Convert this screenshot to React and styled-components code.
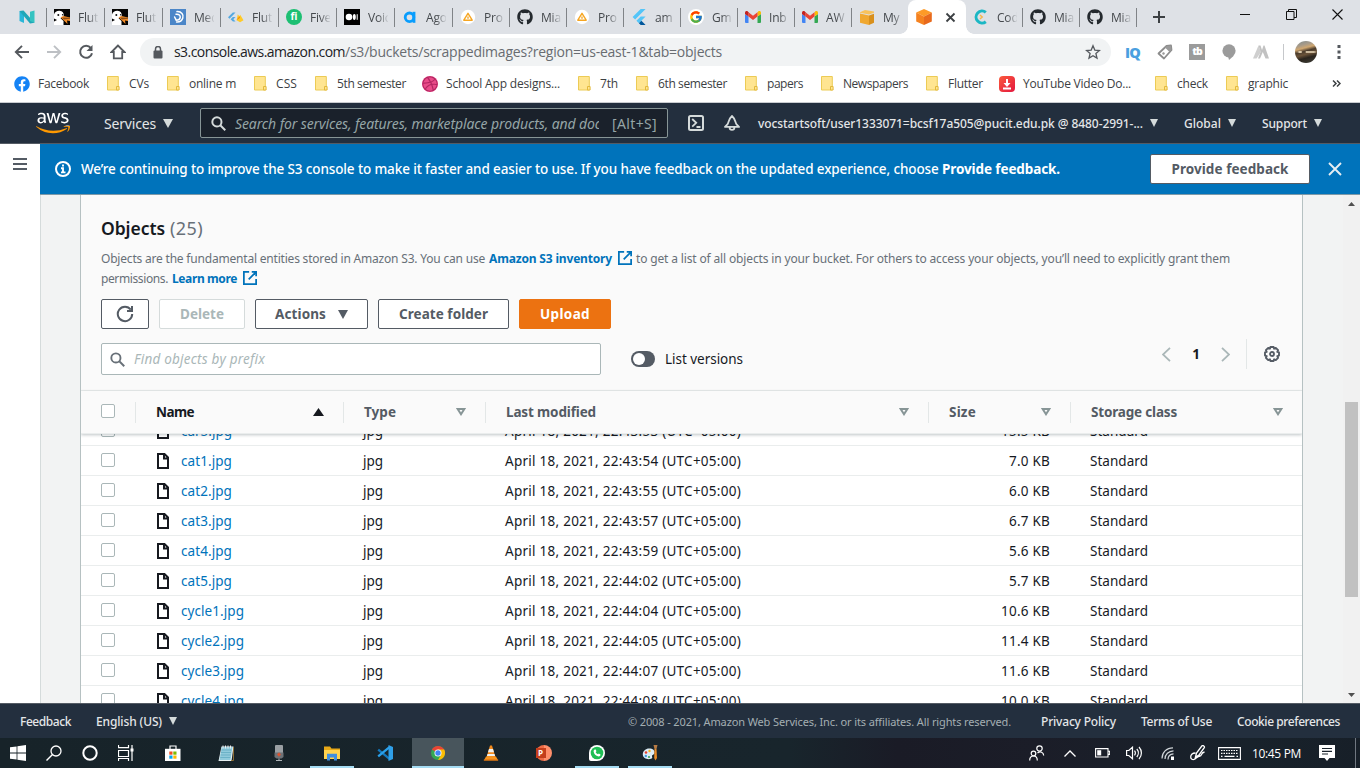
import React, { useLayoutEffect, useRef } from "react";
import styled, { createGlobalStyle, css } from "styled-components";
import { FaAws, FaGithub, FaDribbble, FaFacebook, FaWhatsapp } from "react-icons/fa";
import { FcGoogle } from "react-icons/fc";

const ember = `"Noto Sans", "Open Sans", sans-serif`;
const segoe = `"Open Sans", "Noto Sans", sans-serif`;

const GlobalStyle = createGlobalStyle`
  * { box-sizing: border-box; }
  body { margin: 0; overflow: hidden; background: #fff; font-family: ${ember}; }
  svg { display: block; flex: none; }
`;

/* ---------- text tracked to a set width ---------- */

const Tracked = styled.span`
  display: inline-block;
  flex: none;
  width: ${(p) => p.$w}px;
  white-space: pre;
  font-size: ${(p) => (p.$size ? `${p.$size}px` : "inherit")};
  font-weight: ${(p) => p.$weight || "inherit"};
  color: ${(p) => p.$color || "inherit"};
`;

function Fit({ w, size, weight, color, children }) {
  const ref = useRef(null);
  useLayoutEffect(() => {
    const el = ref.current;
    el.style.letterSpacing = "0px";
    const natural = el.getBoundingClientRect().width;
    el.style.letterSpacing = `${(w - natural) / children.length}px`;
  }, [w, children]);
  return (
    <Tracked $w={w} $size={size} $weight={weight} $color={color}>
      <span ref={ref}>{children}</span>
    </Tracked>
  );
}

/* ---------- shared shapes ---------- */

const Svg = ({ s = 16, w, h, box = "0 0 16 16", children, ...rest }) => (
  <svg width={w || s} height={h || s} viewBox={box} fill="none" {...rest}>
    {children}
  </svg>
);

const Caret = styled.i`
  flex: none;
  width: 0;
  height: 0;
  margin-left: ${(p) => p.$gap || 0}px;
  border: ${(p) => p.$half || 4.5}px solid transparent;
  border-bottom-width: 0;
  border-top: ${(p) => p.$h || 8}px solid ${(p) => p.$color || "#d5dbdb"};
`;

/* ---------- browser frame ---------- */

const Screen = styled.div`
  width: 1360px;
  height: 768px;
  display: flex;
  flex-direction: column;
  overflow: hidden;
`;

const TabStrip = styled.div`
  height: 34px;
  flex: none;
  display: flex;
  background: #dee1e6;
  font: 12px ${segoe};
  color: #45494d;
`;

const Tab = styled.div`
  width: ${(p) => p.$w || 57}px;
  height: 34px;
  display: flex;
  align-items: center;
  gap: 8px;
  padding-left: 7px;
  position: relative;
  ${(p) =>
    !p.$last &&
    css`
      &::after {
        content: "";
        position: absolute;
        right: 0;
        top: 8px;
        width: 1px;
        height: 19px;
        background: #808387;
      }
    `}
`;

const FirstTab = styled(Tab)`
  padding-left: 19px;
`;

const ActiveTab = styled(Tab)`
  background: #fff;
  border-radius: 8px 8px 0 0;
  padding-left: 8px;
  gap: 13px;
  &::before {
    content: "";
    position: absolute;
    left: -8px;
    right: -8px;
    bottom: 0;
    height: 8px;
    background: radial-gradient(circle at 0 0, transparent 7.5px, #fff 8px) left / 8px 8px no-repeat,
      radial-gradient(circle at 100% 0, transparent 7.5px, #fff 8px) right / 8px 8px no-repeat;
  }
`;

const TabLabel = styled.span`
  width: 20px;
  white-space: nowrap;
  font-size: 12px;
  letter-spacing: -0.2px;
  mask-image: linear-gradient(90deg, #000 50%, transparent 105%);
`;

const NewTab = styled.div`
  width: 44px;
  display: flex;
  align-items: center;
  padding-left: 16px;
`;

const WindowControls = styled.div`
  margin-left: auto;
  height: 28px;
  display: flex;
  align-items: center;
  gap: 35px;
  padding-right: 17px;
`;

const Toolbar = styled.div`
  height: 35px;
  flex: none;
  display: flex;
  align-items: center;
  padding: 1px 0 0 14px;
  background: #fff;
`;

const NavButtons = styled.div`
  width: 126px;
  display: flex;
  gap: 16px;
`;

const Omnibox = styled.div`
  width: 971px;
  height: 28px;
  border-radius: 14px;
  background: #f1f3f4;
  display: flex;
  align-items: center;
  padding: 0 10px 0 13px;
  font: 14px ${segoe};
  color: #202124;
`;

const Url = styled.div`
  margin-left: 11px;
  flex: 1;
  display: flex;
  line-height: 26px;
`;

const Extensions = styled.div`
  display: flex;
  align-items: center;
  gap: 16px;
  margin-left: 14px;
`;

const IqMark = styled.b`
  width: 16px;
  font: 800 14.5px/15px ${segoe};
  letter-spacing: -0.8px;
  color: #4a9fe0;
`;

const TbMark = styled.b`
  width: 16px;
  height: 16px;
  background: #9b9b9b;
  color: #fff;
  font: 800 10.5px/15px ${segoe};
  letter-spacing: -1px;
  text-align: center;
`;

const ToolbarRule = styled.i`
  width: 1px;
  height: 16px;
  background: #c6c8cb;
  margin-left: -2px;
`;

const Avatar = styled.i`
  width: 22px;
  height: 22px;
  border-radius: 50%;
  margin: 0 4px 0 -5px;
  background: linear-gradient(90deg, transparent 10%, #d9c7a8 20% 28%, transparent 34% 46%, #cbb99c 52% 86%, transparent) 0 10px /
      22px 2px no-repeat,
    linear-gradient(165deg, #7f8c90 0, #a99b88 22%, #d0a770 34%, #4b3c2d 46%, #6b5339 58%, #2a241d 72%, #41413a 100%);
`;

const Bookmarks = styled.div`
  height: 34px;
  flex: none;
  display: flex;
  align-items: center;
  gap: 16px;
  padding: 0 19px 4px 14px;
  background: #fff;
  border-bottom: 1px solid #c9ccd0;
  font: 12px ${segoe};
  color: #3c4043;
`;

const Bookmark = styled.div`
  display: flex;
  align-items: center;
  gap: 8px;
  margin-right: ${(p) => p.$after || 0}px;
`;

const FolderSlot = styled.i`
  width: 16px;
  display: flex;
  justify-content: center;
`;

const YtSlot = styled.i`
  width: 16px;
  height: 16px;
  border-radius: 4px;
  background: linear-gradient(135deg, #fb5a3c, #e3183f);
`;

const Overflow = styled.div`
  margin-left: auto;
`;

/* ---------- AWS console ---------- */

const AwsNav = styled.div`
  height: 41px;
  flex: none;
  display: flex;
  align-items: center;
  padding-left: 36px;
  background: #232f3e;
  border-bottom: 1px solid #545b64;
  color: #e4e6e8;
  font-size: 12px;
`;

const AwsLogo = styled.div`
  width: 68px;
  svg {
    fill: url(#aws-tone);
  }
`;

const ServicesMenu = styled.div`
  width: 96px;
  display: flex;
  align-items: center;
  font-size: 14px;
`;

const NavSearch = styled.div`
  width: 468px;
  height: 30px;
  display: flex;
  align-items: center;
  padding-left: 10px;
  border: 1px solid #879596;
  border-radius: 2px;
  background: #1a212b;
  color: #95a5a6;
  font-size: 14px;
`;

const NavPlaceholder = styled.div`
  width: 364px;
  margin: 0 13px 0 9px;
  overflow: hidden;
  font-style: italic;
  white-space: nowrap;
`;

const NavIcons = styled.div`
  display: flex;
  gap: 20px;
  margin: 0 18px 0 20px;
`;

const NavMenu = styled.div`
  display: flex;
  align-items: center;
  font-weight: 500;
  margin-right: ${(p) => p.$after || 0}px;
`;

const Console = styled.div`
  height: 559px;
  flex: none;
  display: flex;
`;

const SideRail = styled.div`
  width: 41px;
  padding: 14px 0 0 13px;
  background: #fff;
  border-right: 1px solid #d5dbdb;
`;

const Main = styled.div`
  flex: 1;
  display: flex;
  flex-direction: column;
  margin-left: -1px;
  z-index: 1;
`;

const Banner = styled.div`
  height: 51px;
  flex: none;
  display: flex;
  align-items: center;
  padding: 0 18px 0 15px;
  background: #0073bb;
  border-bottom: 1px solid #7d99a8;
  color: #fff;
  font-size: 14px;
`;

const BannerText = styled.div`
  flex: 1;
  margin-left: 10px;
  display: flex;
`;

const Button = styled.button`
  height: ${(p) => p.$h || 30}px;
  width: ${(p) => p.$w}px;
  display: flex;
  align-items: center;
  justify-content: center;
  padding: 0;
  border: 1px solid ${(p) => (p.$kind === "primary" ? "#ec7211" : p.$kind === "off" ? "#d5dbdb" : "#545b64")};
  border-radius: 2px;
  background: ${(p) => (p.$kind === "primary" ? "#ec7211" : "#fff")};
  color: ${(p) => (p.$kind === "primary" ? "#fff" : p.$kind === "off" ? "#aab7b8" : "#545b64")};
  font: 700 13.5px ${ember};
`;

const BannerClose = styled.div`
  margin-left: 18px;
`;

const Viewport = styled.div`
  height: 508px;
  display: flex;
  background: #f2f3f3;
  padding-left: 40px;
  border-left: 1px solid #d5dbdb;
`;

const Card = styled.section`
  width: 1223px;
  margin-left: -1px;
  border: solid #b6c1c2;
  border-width: 0 1px;
  background: #fff;
  overflow: hidden;
  color: #16191f;
  font-size: 14px;
`;

const CardHead = styled.header`
  height: 196px;
  padding: 19px 20px 0;
  background: #fafafa;
  border-bottom: 1px solid #eaeded;
`;

const Title = styled.h2`
  margin: 0;
  height: 28px;
  display: flex;
  align-items: center;
  gap: 5px;
  font: 700 18px ${ember};
`;

const Description = styled.div`
  margin-top: 6px;
  color: #687078;
  font-size: 12px;
`;

const DescriptionLine = styled.div`
  height: 20px;
  display: flex;
  align-items: center;
  gap: 4px;
`;

const Link = styled.a`
  display: inline-flex;
  align-items: center;
  gap: 6px;
  color: #0073bb;
`;

const Actions = styled.div`
  display: flex;
  gap: 10px;
  margin-top: 11px;
`;

const FilterRow = styled.div`
  display: flex;
  height: 32px;
  margin-top: 14px;
`;

const FilterInput = styled.div`
  width: 500px;
  height: 32px;
  display: flex;
  align-items: center;
  gap: 9px;
  padding-left: 8px;
  border: 1px solid #aab7b8;
  border-radius: 2px;
  background: #fff;
  color: #aab7b8;
  font-style: italic;
`;

const VersionToggle = styled.label`
  display: flex;
  align-items: center;
  gap: 10px;
  margin-left: 30px;
`;

const Switch = styled.i`
  width: 24px;
  height: 16px;
  padding: 2px;
  border-radius: 8px;
  background: #545b64;
  &::before {
    content: "";
    display: block;
    width: 12px;
    height: 12px;
    border-radius: 50%;
    background: #fff;
  }
`;

const Pager = styled.div`
  height: 30px;
  display: flex;
  align-items: center;
  margin: -4px 2px 0 auto;
`;

const PageNumber = styled.b`
  width: 50px;
  text-align: center;
  font-size: 13.5px;
`;

const PagerRule = styled.i`
  width: 1px;
  height: 30px;
  margin: 0 17px 0 16px;
  background: #e3e7e7;
`;

const columns = "55px 208px 142px 443px 142px 231px";

const HeadRow = styled.div`
  position: relative;
  display: grid;
  grid-template-columns: ${columns};
  height: 43px;
  background: #fafafa;
  border-bottom: 1px solid #eaeded;
  box-shadow: 0 1px 3px rgba(0, 28, 36, 0.25);
  z-index: 1;
`;

const HeadCell = styled.div`
  display: flex;
  align-items: center;
  justify-content: space-between;
  padding: 0 20px;
  position: relative;
  font-weight: 700;
  font-size: 13.5px;
  color: ${(p) => (p.$sorted ? "#16191f" : "#545b64")};
  &:last-child {
    padding-right: 19px;
  }
  &:not(:last-child)::after {
    content: "";
    position: absolute;
    right: 0;
    top: 11px;
    width: 1px;
    height: 21px;
    background: #e3e7e7;
  }
`;

const SelectAllCell = styled(HeadCell)`
  padding-bottom: 2px;
`;

const Rows = styled.div`
  margin-top: -18px;
`;

const Row = styled.div`
  display: grid;
  grid-template-columns: ${columns};
  height: 30px;
  border-bottom: 1px solid #eaeded;
  font-size: 13.5px;
`;

const Cell = styled.div`
  display: flex;
  align-items: center;
  padding: 1px 21px 0 19px;
  justify-content: ${(p) => (p.$right ? "flex-end" : "flex-start")};
`;

const CheckCell = styled(Cell)`
  padding: 0 0 1px 20px;
`;

const NameCell = styled(Cell)`
  padding-left: 21px;
  gap: 12px;
  color: #0073bb;
`;

const Checkbox = styled.i`
  width: 14px;
  height: 14px;
  border: 1px solid #aab7b8;
  border-radius: 2px;
  background: #fff;
`;

const ScrollTrack = styled.div`
  width: 17px;
  margin-left: auto;
  display: flex;
  flex-direction: column;
  align-items: center;
  padding: 7px 0 6px;
  background: #f1f1f1;
`;

const Thumb = styled.i`
  width: 13px;
  height: 195px;
  margin: 196px 0 auto;
  background: #c1c1c1;
`;

const Footer = styled.footer`
  height: 35px;
  flex: none;
  display: flex;
  align-items: center;
  padding: 1px 20px 0;
  background: #232f3e;
  border-top: 1px solid #545b64;
  color: #e4e6e8;
  font-size: 12px;
  font-weight: 500;
  z-index: 2;
`;

const Legal = styled.div`
  margin-left: auto;
  display: flex;
  gap: 25px;
`;

const LegalNote = styled.div`
  margin-right: 5px;
  font-weight: 400;
`;

const FooterMenu = styled.div`
  display: flex;
  align-items: center;
  margin-left: 25px;
  padding-bottom: 1px;
`;

/* ---------- taskbar ---------- */

const Taskbar = styled.div`
  height: 30px;
  flex: none;
  display: flex;
  background: linear-gradient(90deg, #172329 0, #18252c 58%, #1a1b26 66%, #1b1d28 76%, #18222b 92%, #171f28 100%);
  color: #fff;
`;

const SystemButtons = styled.div`
  width: 146px;
  display: flex;
  align-items: center;
  gap: 20px;
  padding-left: 10px;
`;

const AppSlot = styled.div`
  width: ${(p) => (p.$active ? 52 : 44)}px;
  margin: 0 ${(p) => (p.$active ? 0.5 : 4.5)}px;
  height: 30px;
  display: flex;
  align-items: center;
  justify-content: center;
  background: ${(p) => (p.$active ? "#48555c" : "transparent")};
  box-shadow: ${(p) => (p.$open ? "inset 0 -2px 0 #a5dcf3" : "none")};
`;

const Tray = styled.div`
  margin-left: auto;
  display: flex;
  align-items: center;
  padding-right: 4px;
`;

const TraySlot = styled.div`
  width: ${(p) => p.$w}px;
  display: flex;
`;

const Clock = styled.div`
  width: 67px;
  font: 12px ${segoe};
`;

const DesktopEdge = styled.i`
  width: 1px;
  height: 30px;
  background: #707780;
`;

/* ---------- drawings ---------- */

const DuckIcon = () => (
  <Svg>
    <path fill="#050505" d="M0 0h16v16H0z" />
    <path fill="#fff" d="M0 5.500C.8 2.800 3 1.600 5.600 1.800 8.500 2 10 4 9.700 6.500L9.200 8.400 6.500 9.200 9.500 12v4H0v-3.500L3 11 0 9.500z" />
    <circle cx="4.300" cy="6" r="1" fill="#111" />
    <circle cx="8.600" cy="5.800" r=".7" fill="#111" />
    <path fill="#f28c28" d="M6.500 8.200 9.500 7l6.500 1.500v3.500l-3-.5.5 3.500L10 11.500z" />
    <path fill="#8a4d17" d="m8 8.500 8 .2v1L10 10.500z" />
  </Svg>
);

const FlutterIcon = () => (
  <Svg>
    <path fill="#54c5f8" d="M9.7 0 1.6 8l2.5 2.5L14.6 0zM9.7 7.4 5.4 11.7 7.9 14.2l6.7-6.8z" />
    <path fill="#01579b" d="M7.900 14.200 9.700 16h4.900l-4.200-4.300z" />
  </Svg>
);

const FlutterFireIcon = () => (
  <Svg>
    <path fill="#54a8e0" d="M4.800 3.600 0 8.200l1.500 1.500 6-6.100zM4.800 8 2.600 10.200l2.300 2.400h2.600L5.400 10.200 7.500 8z" />
    <path fill="#ffca28" d="m8.600 11.200 1.200-6 1.500 2 .9-1.400 3.300 5.400-3.400 2z" />
    <path fill="#f5820d" d="m8.600 11.200 2.700-4 .8 1.600z" />
  </Svg>
);

const GmailIcon = () => (
  <Svg>
    <path fill="#4285f4" d="M1 14h2.500V7.500L0 5v8a1 1 0 0 0 1 1z" />
    <path fill="#34a853" d="M12.500 14H15a1 1 0 0 0 1-1V5l-3.500 2.500z" />
    <path fill="#fbbc04" d="M12.500 3.400v4.100L16 5V3.600c0-1.400-1.500-2.100-2.600-1.300z" />
    <path fill="#ea4335" d="M3.500 7.500V3.300L8 6.700l4.500-3.400v4.200L8 10.900z" />
    <path fill="#c5221f" d="M0 3.600V5l3.500 2.500V3.300l-.9-1C1.500 1.500 0 2.200 0 3.600z" />
  </Svg>
);

const TriangleDisc = () => (
  <Svg>
    <circle cx="8" cy="8" r="7.200" fill="#fff" />
    <path stroke="#f6a623" strokeWidth="1.400" strokeLinejoin="round" d="M8 4.300 12.200 11.200H3.800zM8 7.400v2.400" />
  </Svg>
);

const CubeIcon = ({ top, left, right }) => (
  <Svg>
    <path fill={top} d="M8 0 15.800 3.600 8 7.400.2 3.600z" />
    <path fill={left} d="M.2 3.600 8 7.400V16L.2 12.400z" />
    <path fill={right} d="M15.800 3.600 8 7.400V16l7.800-3.600z" />
  </Svg>
);

const BoxIcon = () => (
  <Svg>
    <path fill="#f0a830" d="M1 4.600 10 6.500v9.500l-9-2.200z" />
    <path fill="#d9901c" d="m10 6.500 5-1.700v9l-5 2.200z" />
    <path fill="#f8c25b" d="M1 3.200 6 1l9 1.600v1.200l-5 1.700-9-1.700z" />
  </Svg>
);

const NIcon = () => (
  <Svg>
    <path fill="#29b6d8" d="M.5 2 5 4v10L.5 12z" />
    <path fill="#1fa7b8" d="m.5 2 4-.6 11 12.400-4.500.6z" />
    <path fill="#35c3c1" d="M11 2.800 15.500 1.500v12.300L11 12z" />
  </Svg>
);

const MeIcon = () => (
  <Svg>
    <rect width="16" height="16" fill="#4b86c8" />
    <path
      stroke="#fff"
      strokeWidth="1.500"
      strokeLinecap="round"
      d="M7 2.600c4.400-.3 7 3 5.800 6.400-.9 2.600-3.600 4.200-6.200 4M6 5.200c3-.4 4.600 1.400 4.200 3.400-.4 1.700-2 2.600-4 2.600L4.600 8"
    />
  </Svg>
);

const FiverrDisc = styled.b`
  width: 16px;
  height: 16px;
  border-radius: 50%;
  background: #1dbf73;
  color: #fff;
  font: 700 10px/15px ${segoe};
  text-align: center;
`;

const MediumIcon = () => (
  <Svg>
    <rect width="16" height="16" fill="#000" />
    <circle cx="5" cy="8" r="3.300" fill="#fff" />
    <ellipse cx="10.300" cy="8" rx="1.500" ry="3" fill="#fff" />
    <rect x="12.700" y="5.200" width="1" height="5.600" fill="#fff" />
  </Svg>
);

const AgoraIcon = () => (
  <Svg>
    <circle cx="7.500" cy="8.300" r="4.300" stroke="#099dfd" strokeWidth="2.800" />
    <path stroke="#099dfd" strokeWidth="2.800" d="M12 2.800v11" />
  </Svg>
);

const CodingIcon = () => (
  <Svg>
    <path stroke="#1bb7c4" strokeWidth="3" d="M12.800 3.300A6 6 0 1 0 12.800 12.700" />
    <path stroke="#f5b74a" strokeWidth="1.500" d="m7 6 2.200 2L7 10" />
  </Svg>
);

const FolderIcon = () => (
  <Svg w={13} h={15} box="0 0 13 15">
    <path fill="#ffe591" stroke="#eccb55" d="M.5.5h10.800v13.500H.5z" />
    <path fill="#ffe591" stroke="#e3b93c" d="M9.500 14v-3.500h2.600V14z" />
  </Svg>
);

const SearchIcon = ({ color, s = 16, w = 2 }) => (
  <Svg s={s}>
    <circle cx="6.300" cy="6.300" r="4.900" stroke={color} strokeWidth={w} />
    <path stroke={color} strokeWidth={w} d="m9.900 9.900 5.300 5.300" />
  </Svg>
);

const ExternalIcon = () => (
  <Svg s={14}>
    <path stroke="#0073bb" strokeWidth="2" d="M7 1H1v14h14V9M10 1h5v5M15 1 6.500 9.500" />
  </Svg>
);

const RefreshIcon = () => (
  <Svg s={18} box="0 0 18 18">
    <path stroke="#545b64" strokeWidth="2" d="M14.800 4.700A7.200 7.200 0 1 0 16.200 9M16 1v5h-5" />
  </Svg>
);

const FileIcon = () => (
  <Svg w={12} h={16} box="0 0 12 16">
    <path stroke="#16191f" strokeWidth="2" d="M1 1h6.500L11 4.500V15H1zM7 1v4.500h4" />
  </Svg>
);

const GearIcon = () => (
  <Svg>
    <path
      stroke="#545b64"
      strokeWidth="1.900"
      strokeLinejoin="round"
      d="M6.400 1h3.200l.5 1.700 1.700-.8 2.300 2.300-.8 1.700 1.700.5v3.200l-1.700.5.8 1.700-2.300 2.300-1.700-.8-.5 1.700H6.400l-.5-1.700-1.700.8-2.300-2.300.8-1.700L1 9.600V6.400l1.700-.5-.8-1.700 2.300-2.300 1.700.8z"
    />
    <circle cx="8" cy="8" r="2" stroke="#545b64" strokeWidth="1.800" />
  </Svg>
);

const SortIcon = () => (
  <Svg w={10} h={8} box="0 0 10 8">
    <path stroke="#879596" strokeWidth="2" d="M1.700 1h6.600L5 6.200z" />
  </Svg>
);

const Chevron = ({ flip }) => (
  <Svg w={9} h={15} box="0 0 9 15">
    <path stroke="#aab7b8" strokeWidth="1.800" d={flip ? "m1 .8 7 6.700-7 6.700" : "m8 .8-7 6.700 7 6.700"} />
  </Svg>
);

const VscodeIcon = () => (
  <Svg>
    <path stroke="#1377bd" strokeWidth="2.300" d="M1.200 4.700 12.500 13.800" />
    <path stroke="#2aa0ea" strokeWidth="2.300" d="M12.500 2.200 1.200 11.400" />
    <path fill="#2f9fe8" d="M11.500 0 16 2v12l-4.500 2z" />
  </Svg>
);

const ChromeIcon = () => (
  <Svg>
    <circle cx="8" cy="8" r="7" fill="#34a853" />
    <path fill="#ea4335" d="M8 8 1.900 4.500A7 7 0 0 1 14.100 4.500L15 8z" />
    <path fill="#fbbc05" d="M8 4.600h6.200A7 7 0 0 1 8 15l3-5z" />
    <circle cx="8" cy="8" r="3.500" fill="#fff" />
    <circle cx="8" cy="8" r="2.700" fill="#4285f4" />
  </Svg>
);

const StoreIcon = () => (
  <Svg>
    <path stroke="#fff" strokeWidth="1.200" d="M5 4V1h6v3" />
    <path fill="#fff" d="M0 3.800h15.500V16H0z" />
    <path fill="#f25022" d="M4.300 6.500h3.200v3.200H4.300z" />
    <path fill="#7fba00" d="M8.300 6.500h3.200v3.200H8.300z" />
    <path fill="#00a4ef" d="M4.300 10.500h3.200v3.200H4.300z" />
    <path fill="#ffb900" d="M8.300 10.500h3.200v3.200H8.300z" />
  </Svg>
);

const NotepadIcon = () => (
  <Svg>
    <path fill="#e8f0f2" d="M3.500 1.500h12L13.500 16H.5z" />
    <path fill="#8fcadb" d="M3.700 2h10.800l-2 13H1.500z" />
    <path stroke="#5ba7be" strokeWidth=".7" d="M3.500 5h10M3 7.500h10M2.600 10h10M2.300 12.500h10" />
    <path stroke="#e9eef0" strokeWidth="1" d="M5 .5v3M7.500.5v3M10 .5v3M12.500.5v3" />
    <path stroke="#a8803a" strokeWidth=".8" d="M15.500 2v13.500H13" />
  </Svg>
);

const RecorderIcon = () => (
  <Svg>
    <rect x="4" y="0" width="8" height="9.500" rx="1" fill="#9a9fa3" />
    <path fill="#6d7277" d="M3.500 7.500h9V12l-2 1.500h-5l-2-1.500z" />
    <path stroke="#e2502b" strokeWidth="1.500" d="M8 7.800v3.400M6.300 9.500h3.400" />
    <path stroke="#aeb4b8" d="M8 13.500V16M5 15.500h6" />
  </Svg>
);

const ExplorerIcon = () => (
  <Svg>
    <path fill="#e8a917" d="M0 1.500h6l1.500 2H16V14H0z" />
    <path fill="#ffd34f" d="M0 5h16v9H0z" />
    <path fill="#3f8fe0" d="M3 15.500V8.800h10v6.700h-3v-3H6v3z" />
  </Svg>
);

const VlcIcon = () => (
  <Svg>
    <path fill="#f28a1c" d="M7 .5h2l3.600 12H3.400z" />
    <path fill="#eef0f0" d="M6 4h4l1 3.200H5zM4.500 9h7l.6 2H3.900z" />
    <path fill="#f7941d" d="M3 11.500h10l2.200 4H.8z" />
    <path fill="#d66a0e" d="M.8 14.500h14.400v1H.8z" />
  </Svg>
);

const PptShape = styled.div`
  width: 16px;
  height: 16px;
  display: flex;
  align-items: center;
  border-radius: 50%;
  background: linear-gradient(90deg, #ed6c47 50%, #ff8f6b 50%);
  b {
    width: 10px;
    height: 10px;
    background: #c43e1c;
    font: 700 8px/10px ${segoe};
    text-align: center;
  }
`;

const WhatsappDisc = styled.div`
  width: 16px;
  height: 16px;
  display: grid;
  place-items: center;
  border-radius: 50% 50% 50% 12%;
  background: #fff;
`;

const WhatsappGlyph = () => (
  <Svg s={14} box="0 0 14 14">
    <circle cx="7" cy="7" r="6.300" fill="#1fbf55" />
    <path fill="#fff" d="M4.600 3.500 5.800 3.600 6.400 5.300 5.700 6.200C6.200 7.200 7 7.900 8 8.300L8.800 7.500 10.500 8.400C10.600 9.700 9.600 10.500 8.500 10.400 5.800 10 3.900 8 3.600 5.600 3.600 4.600 3.900 4 4.600 3.500z" />
  </Svg>
);

const PaintIcon = () => (
  <Svg>
    <path fill="#dcecf6" d="M7 3.500c4 0 6 2 5.500 4.500-.4 2-2.500 1.500-2.500 3s1 2-1 2.700C6 15 .8 13.500.8 9.500c0-3.500 3-6 6.200-6z" />
    <circle cx="4" cy="7.500" r="1.300" fill="#e5412e" />
    <circle cx="7.500" cy="6" r="1.200" fill="#f7b51b" />
    <circle cx="3.800" cy="11" r="1.200" fill="#3c9be0" />
    <circle cx="7" cy="12" r="1.100" fill="#3da557" />
    <path fill="#b57b45" d="M11.500 0h4l-1 4h-2z" />
    <path fill="#e78a26" d="M12.500 4h2l.5 9-1.500 2.500L12.200 13z" />
  </Svg>
);

const Facebook = styled(FaFacebook)`
  color: #1583f5;
`;
const Dribbble = styled(FaDribbble)`
  color: #b32763;
  background: #ea4c89;
  border-radius: 50%;
`;
const Github = styled(FaGithub)`
  color: #24292e;
`;
const GoogleDisc = styled.span`
  width: 16px;
  height: 16px;
  flex: none;
  display: grid;
  place-items: center;
  border-radius: 50%;
  background: #fff;
`;

/* ---------- data ---------- */

const github = <Github size={16} />;
const tabs = [
  [<DuckIcon />, "Flut", 58],
  [<DuckIcon />, "Flut", 58],
  [<MeIcon />, "Med", 58],
  [<FlutterFireIcon />, "Flut", 58],
  [<FiverrDisc>fi</FiverrDisc>, "Five", 58],
  [<MediumIcon />, "Voic", 58],
  [<AgoraIcon />, "Ago", 58],
  [<TriangleDisc />, "Pro", 57],
  [github, "Mia", 57],
  [<TriangleDisc />, "Pro", 57],
  [<FlutterIcon />, "am", 57],
  [<GoogleDisc><FcGoogle size={14} /></GoogleDisc>, "Gm", 57],
  [<GmailIcon />, "Inb", 57],
  [<GmailIcon />, "AW", 57],
  [<BoxIcon />, "My", 56],
];
const tabsAfter = [
  [<CodingIcon />, "Cod", 57],
  [github, "Mia", 57],
  [github, "Mia", 57],
];

const bookmarks = [
  ["fb", "Facebook", 51],
  ["dir", "CVs", 20],
  ["dir", "online m", 47],
  ["dir", "CSS", 21],
  ["dir", "5th semester", 69],
  ["dr", "School App designs...", 114],
  ["dir", "7th", 18],
  ["dir", "6th semester", 69],
  ["dir", "papers", 36],
  ["dir", "Newspapers", 65],
  ["dir", "Flutter", 35],
  ["yt", "YouTube Video Do...", 108, 6],
  ["dir", "check", 31],
  ["dir", "graphic", 40],
];

const files = [
  ["car5.jpg", 51, "22:43:53", "15.5 KB"],
  ["cat1.jpg", 51, "22:43:54", "7.0 KB"],
  ["cat2.jpg", 51, "22:43:55", "6.0 KB"],
  ["cat3.jpg", 51, "22:43:57", "6.7 KB"],
  ["cat4.jpg", 51, "22:43:59", "5.6 KB"],
  ["cat5.jpg", 51, "22:44:02", "5.7 KB"],
  ["cycle1.jpg", 63, "22:44:04", "10.6 KB"],
  ["cycle2.jpg", 63, "22:44:05", "11.4 KB"],
  ["cycle3.jpg", 63, "22:44:07", "11.6 KB"],
  ["cycle4.jpg", 63, "22:44:08", "10.0 KB"],
];

const BookmarkIcon = ({ kind }) => {
  if (kind === "fb") return <Facebook size={16} />;
  if (kind === "dr") return <Dribbble size={16} />;
  if (kind === "yt")
    return (
      <YtSlot>
        <Svg>
          <path stroke="#fff" strokeWidth="2" d="M8 3v5M4 12.500h8" />
          <path fill="#fff" d="M4.500 7h7L8 11z" />
        </Svg>
      </YtSlot>
    );
  return (
    <FolderSlot>
      <FolderIcon />
    </FolderSlot>
  );
};

/* ---------- sections ---------- */

const TabItem = ({ item: [icon, label, w], last }) => (
  <Tab $w={w} $last={last}>
    {icon}
    <TabLabel>{label}</TabLabel>
  </Tab>
);

const BrowserTabs = () => (
  <TabStrip>
    <FirstTab $w={47}>
      <NIcon />
    </FirstTab>
    {tabs.map((t, i) => (
      <TabItem key={i} item={t} last={i === tabs.length - 1} />
    ))}
    <ActiveTab $w={58} $last>
      <CubeIcon top="#fd9a27" left="#f58220" right="#e86a1c" />
      <Svg w={11} h={11} box="0 0 11 11">
        <path stroke="#3c4043" strokeWidth="1.800" d="m1.500 1.500 8 8m0-8-8 8" />
      </Svg>
    </ActiveTab>
    {tabsAfter.map((t, i) => (
      <TabItem key={i} item={t} />
    ))}
    <NewTab>
      <Svg w={12} h={12} box="0 0 12 12">
        <path stroke="#3c4043" strokeWidth="2" d="M6 0v12M0 6h12" />
      </Svg>
    </NewTab>
    <WindowControls>
      <Svg w={11} h={11} box="0 0 11 11">
        <path stroke="#111" d="M0 5.500h10" />
      </Svg>
      <Svg w={11} h={11} box="0 0 11 11">
        <path stroke="#111" d="M.5 2.500h7.500v8H.5zM2.500 2.500v-2h8v8H8" />
      </Svg>
      <Svg w={11} h={11} box="0 0 11 11">
        <path stroke="#111" strokeWidth="1.100" d="m.5.5 10 10m0-10-10 10" />
      </Svg>
    </WindowControls>
  </TabStrip>
);

const BrowserToolbar = () => (
  <Toolbar>
    <NavButtons>
      <Svg>
        <path stroke="#55595e" strokeWidth="1.900" d="M15 8H2.500M8 1.800 1.800 8 8 14.200" />
      </Svg>
      <Svg>
        <path stroke="#bdc0c4" strokeWidth="1.900" d="M1 8h12.500M8 1.800 14.200 8 8 14.200" />
      </Svg>
      <Svg>
        <path stroke="#55595e" strokeWidth="2" d="M12.800 4A6 6 0 1 0 14 9.200" />
        <path fill="#55595e" d="M14.500 1v6h-6z" />
      </Svg>
      <Svg>
        <path stroke="#55595e" strokeWidth="1.800" d="M8 1.500 1.600 8h2.200v6.300h8.400V8h2.200z" />
      </Svg>
    </NavButtons>
    <Omnibox>
      <Svg w={10} h={13} box="0 0 10 13">
        <rect x=".5" y="4.500" width="9" height="8" rx="1" fill="#55595e" />
        <path stroke="#55595e" strokeWidth="1.500" d="M2.500 5V3a2.500 2.500 0 0 1 5 0v2" />
      </Svg>
      <Url>
        <Fit w={171}>s3.console.aws.amazon.com</Fit>
        <Fit w={377} color="#686c71">/s3/buckets/scrappedimages?region=us-east-1&amp;tab=objects</Fit>
      </Url>
      <Svg>
        <path
          stroke="#55595e"
          strokeWidth="1.300"
          d="m8 1.800 1.800 4.300 4.700.4-3.600 3 1.100 4.600L8 11.700l-4 2.400 1.100-4.600-3.600-3 4.700-.4z"
        />
      </Svg>
    </Omnibox>
    <Extensions>
      <IqMark>IQ</IqMark>
      <Svg>
        <path stroke="#8c8c8c" strokeWidth="1.800" strokeLinejoin="round" d="m1.500 9.500 8-7.500 4.500-.5.500 4.500-7.500 8.500z" />
        <path fill="#9a9a9a" d="m10 2 4-.5.5 4.500-2 2-4.500-4.500zM5 9l2-1 1 2-2 1z" />
      </Svg>
      <TbMark>tb</TbMark>
      <Svg>
        <circle cx="8" cy="6.800" r="6.600" fill="#9b9b9b" />
        <path fill="#9b9b9b" d="M7 12h5.500L8 16z" />
      </Svg>
      <Svg>
        <path fill="#c2c2c2" d="M5.500 1.500h2L9 6l1.500-4.500h1L16 14.500h-3.500L9.800 8 7 14.500H5L7.500 8z" />
        <path fill="#cfcfcf" d="M5.500 1.500 8 8 3.500 14.500H0z" />
      </Svg>
      <ToolbarRule />
      <Avatar />
      <Svg w={4} h={14} box="0 0 4 14">
        <path fill="#55595e" d="M.5 0h3v3h-3zM.5 5.500h3v3h-3zM.5 11h3v3h-3z" />
      </Svg>
    </Extensions>
  </Toolbar>
);

const BookmarkBar = () => (
  <Bookmarks>
    {bookmarks.map(([kind, label, w, after], i) => (
      <Bookmark key={i} $after={after}>
        <BookmarkIcon kind={kind} />
        <Fit w={w}>{label}</Fit>
      </Bookmark>
    ))}
    <Overflow>
      <Svg w={9} h={7} box="0 0 9 7">
        <path stroke="#3c4043" strokeWidth="1.500" d="m1 .5 3 3-3 3M5 .5l3 3-3 3" />
      </Svg>
    </Overflow>
  </Bookmarks>
);

const AwsHeader = () => (
  <AwsNav>
    <AwsLogo>
      <svg width="0" height="0">
        <linearGradient id="aws-tone" gradientUnits="userSpaceOnUse" x1="0" y1="0" x2="0" y2="512">
          <stop offset=".6" stopColor="#fff" />
          <stop offset=".6" stopColor="#ff9900" />
        </linearGradient>
      </svg>
      <FaAws size={34} />
    </AwsLogo>
    <ServicesMenu>
      <Fit w={52}>Services</Fit>
      <Caret $gap={7} $half={5} $h={9} />
    </ServicesMenu>
    <NavSearch>
      <SearchIcon color="#d5dbdb" s={15} w={2.1} />
      <NavPlaceholder>
        <Fit w={372}>Search for services, features, marketplace products, and docs</Fit>
      </NavPlaceholder>
      <Fit w={45}>[Alt+S]</Fit>
    </NavSearch>
    <NavIcons>
      <Svg>
        <rect x="1" y="1" width="14" height="14" rx="1.500" stroke="#d5dbdb" strokeWidth="2" />
        <path stroke="#d5dbdb" strokeWidth="1.800" d="m4.200 4 4 3.800-4 3.800M8.500 12h4" />
      </Svg>
      <Svg>
        <path
          stroke="#d5dbdb"
          strokeWidth="1.800"
          strokeLinejoin="round"
          d="M8 1C5.500 3 5 6 3.600 9.200L1 11.900h14l-2.600-2.700C11 6 10.500 3 8 1zM5.600 12.500a2.400 2.400 0 0 0 4.800 0"
        />
      </Svg>
    </NavIcons>
    <NavMenu $after={26}>
      <Fit w={385}>vocstartsoft/user1333071=bcsf17a505@pucit.edu.pk @ 8480-2991-...</Fit>
      <Caret $gap={7} />
    </NavMenu>
    <NavMenu $after={26}>
      <Fit w={37}>Global</Fit>
      <Caret $gap={7} />
    </NavMenu>
    <NavMenu>
      <Fit w={45}>Support</Fit>
      <Caret $gap={7} />
    </NavMenu>
  </AwsNav>
);

const FeedbackBanner = () => (
  <Banner>
    <Svg>
      <circle cx="8" cy="8" r="7" stroke="#fff" strokeWidth="2" />
      <path stroke="#fff" strokeWidth="1.900" d="M8 3.500v2M6 7.300h2v4M6 11.400h4.500" />
    </Svg>
    <BannerText>
      <Fit w={861} size={13.5} weight={500}>
        {"We’re continuing to improve the S3 console to make it faster and easier to use. If you have feedback on the updated experience, choose "}
      </Fit>
      <Fit w={118} size={13.5} weight={700}>Provide feedback.</Fit>
    </BannerText>
    <Button $w={160}>
      <Fit w={117}>Provide feedback</Fit>
    </Button>
    <BannerClose>
      <Svg w={14} h={14} box="0 0 14 14">
        <path stroke="#e6eef3" strokeWidth="1.900" d="m1 1 12 12M13 1 1 13" />
      </Svg>
    </BannerClose>
  </Banner>
);

const CardHeader = () => (
  <CardHead>
    <Title>
      <Fit w={64} weight={600} size={17.5}>Objects</Fit>
      <Fit w={33} weight={400} size={18} color="#687078">(25)</Fit>
    </Title>
    <Description>
      <DescriptionLine>
        <Fit w={384}>Objects are the fundamental entities stored in Amazon S3. You can use</Fit>
        <Link>
          <Fit w={123} weight={700}>Amazon S3 inventory</Fit>
          <ExternalIcon />
        </Link>
        <Fit w={594}>to get a list of all objects in your bucket. For others to access your objects, you’ll need to explicitly grant them</Fit>
      </DescriptionLine>
      <DescriptionLine>
        <Fit w={67}>permissions.</Fit>
        <Link>
          <Fit w={65} weight={700}>Learn more</Fit>
          <ExternalIcon />
        </Link>
      </DescriptionLine>
    </Description>
    <Actions>
      <Button $w={48}>
        <RefreshIcon />
      </Button>
      <Button $w={86} $kind="off">
        <Fit w={44}>Delete</Fit>
      </Button>
      <Button $w={113}>
        <Fit w={51}>Actions</Fit>
        <Caret $gap={12} $half={5.5} $h={9} $color="#545b64" />
      </Button>
      <Button $w={131}>
        <Fit w={89}>Create folder</Fit>
      </Button>
      <Button $w={92} $kind="primary">
        <Fit w={50}>Upload</Fit>
      </Button>
    </Actions>
    <FilterRow>
      <FilterInput>
        <SearchIcon color="#687078" s={15} w={2} />
        <Fit w={131} size={13.5}>Find objects by prefix</Fit>
      </FilterInput>
      <VersionToggle>
        <Switch />
        <Fit w={78} size={13.5}>List versions</Fit>
      </VersionToggle>
      <Pager>
        <Chevron />
        <PageNumber>1</PageNumber>
        <Chevron flip />
        <PagerRule />
        <GearIcon />
      </Pager>
    </FilterRow>
  </CardHead>
);

const TableHeader = () => (
  <HeadRow>
    <SelectAllCell>
      <Checkbox />
    </SelectAllCell>
    <HeadCell $sorted>
      <Fit w={38}>Name</Fit>
      <Svg w={11} h={8} box="0 0 11 8">
        <path fill="#16191f" d="M5.500 0 11 8H0z" />
      </Svg>
    </HeadCell>
    <HeadCell>
      <Fit w={32}>Type</Fit>
      <SortIcon />
    </HeadCell>
    <HeadCell>
      <Fit w={90}>Last modified</Fit>
      <SortIcon />
    </HeadCell>
    <HeadCell>
      <Fit w={27}>Size</Fit>
      <SortIcon />
    </HeadCell>
    <HeadCell>
      <Fit w={86}>Storage class</Fit>
      <SortIcon />
    </HeadCell>
  </HeadRow>
);

const FileRow = ({ file: [name, nameWidth, time, size] }) => (
  <Row>
    <CheckCell>
      <Checkbox />
    </CheckCell>
    <NameCell>
      <FileIcon />
      <Fit w={nameWidth}>{name}</Fit>
    </NameCell>
    <Cell>
      <Fit w={20}>jpg</Fit>
    </Cell>
    <Cell>
      <Fit w={236}>{`April 18, 2021, ${time} (UTC+05:00)`}</Fit>
    </Cell>
    <Cell $right>
      <Fit w={size.length === 7 ? 49 : 41}>{size}</Fit>
    </Cell>
    <Cell>
      <Fit w={58}>Standard</Fit>
    </Cell>
  </Row>
);

const ConsoleFooter = () => (
  <Footer>
    <Fit w={51}>Feedback</Fit>
    <FooterMenu>
      <Fit w={66}>English (US)</Fit>
      <Caret $gap={7} />
    </FooterMenu>
    <Legal>
      <LegalNote>
        <Fit w={383} size={11} color="#a3aeb2">
          © 2008 - 2021, Amazon Web Services, Inc. or its affiliates. All rights reserved.
        </Fit>
      </LegalNote>
      <Fit w={75}>Privacy Policy</Fit>
      <Fit w={71}>Terms of Use</Fit>
      <Fit w={103}>Cookie preferences</Fit>
    </Legal>
  </Footer>
);

const WindowsTaskbar = () => (
  <Taskbar>
    <SystemButtons>
      <Svg>
        <path fill="#fff" d="M0 2.300 6.600 1.400v6.200H0zM7.400 1.300 16 0v7.600H7.400zM0 8.400h6.600v6.200L0 13.700zM7.400 8.400H16V16l-8.600-1.300z" />
      </Svg>
      <Svg>
        <circle cx="10" cy="6" r="5" stroke="#fff" strokeWidth="1.300" />
        <path stroke="#fff" strokeWidth="1.400" d="M6.500 9.500.5 15.500" />
      </Svg>
      <Svg>
        <circle cx="8" cy="8" r="6.700" stroke="#fff" strokeWidth="2" />
      </Svg>
      <Svg>
        <path stroke="#fff" strokeWidth="1.200" d="M.5 0v2.600h10V0M.5 5.500h10v6H.5zM.5 16v-2.500h10V16M14 0v16" />
        <path fill="#fff" d="M12.500 3.500h3v3h-3z" />
      </Svg>
    </SystemButtons>
    <AppSlot><StoreIcon /></AppSlot>
    <AppSlot><NotepadIcon /></AppSlot>
    <AppSlot><RecorderIcon /></AppSlot>
    <AppSlot $open><ExplorerIcon /></AppSlot>
    <AppSlot><VscodeIcon /></AppSlot>
    <AppSlot $open $active><ChromeIcon /></AppSlot>
    <AppSlot><VlcIcon /></AppSlot>
    <AppSlot><PptShape><b>P</b></PptShape></AppSlot>
    <AppSlot $open>
      <WhatsappDisc>
        <WhatsappGlyph />
      </WhatsappDisc>
    </AppSlot>
    <AppSlot $open><PaintIcon /></AppSlot>
    <Tray>
      <TraySlot $w={35}>
        <Svg>
          <circle cx="10.500" cy="3.500" r="2.700" stroke="#fff" strokeWidth="1.200" />
          <circle cx="4.500" cy="8.500" r="2.300" stroke="#fff" strokeWidth="1.200" />
          <path stroke="#fff" strokeWidth="1.200" d="M.7 15.500c0-2.500 1.500-4.500 3.800-4.500s3.800 2 3.800 4.500M8.500 8c3-2.500 6-.5 6.200 2.500" />
        </Svg>
      </TraySlot>
      <TraySlot $w={31}>
        <Svg w={12} h={7} box="0 0 12 7">
          <path stroke="#fff" strokeWidth="1.300" d="m.5 6.500 5.500-5.500 5.500 5.500" />
        </Svg>
      </TraySlot>
      <TraySlot $w={31}>
        <Svg w={15} h={10} box="0 0 15 10">
          <path stroke="#fff" strokeWidth="1.100" d="M.6.6h12.400v8.400H.6zM13.500 3.200h1.200v3.200h-1.200" />
          <path fill="#fff" d="M2.200 2.200h4v5.200h-4z" />
        </Svg>
      </TraySlot>
      <TraySlot $w={35}>
        <Svg w={17} h={14} box="0 0 17 14">
          <path stroke="#fff" strokeWidth="1.200" d="M.6 4.500h2.200L6.500 1.200v11.600L2.800 9.500H.6zM8.500 4.700c1 1.300 1 3.300 0 4.600M10.800 3c2 2.300 2 5.700 0 8M13 1c3.200 3.500 3.200 8.500 0 12" />
        </Svg>
      </TraySlot>
      <TraySlot $w={29}>
        <Svg w={14} h={14} box="0 0 14 14">
          <path stroke="#cfd4d8" strokeWidth="1.200" d="M1 12.500C1 6.500 5.500 1.800 12 1.800M4 13c0-4.500 3.500-8 8.500-8.200M7 13.500c0-3 2-5.500 5.500-5.700" />
          <path fill="#fff" d="M10 10.500h3V14h-3z" />
        </Svg>
      </TraySlot>
      <TraySlot $w={28}>
        <Svg>
          <path stroke="#fff" strokeWidth="1.300" d="M5.500 12 6.500 8 12 .8c1-.8 3 .5 2.300 1.800L9 10zM5.500 8C2 8 .7 10 .7 12s2 3.200 3.800 2.200c2-1 3-3 5.500-3.200 2 0 .5-3 4.500-4" />
        </Svg>
      </TraySlot>
      <TraySlot $w={34}>
        <Svg w={23} h={13} box="0 0 23 13">
          <path stroke="#fff" strokeWidth="1.100" d="M.6.600h21.800v11.800H.6z" />
          <path stroke="#fff" strokeWidth="1.200" strokeDasharray="1.500 1" d="M3 3.500h17M3 6.300h17" />
          <path stroke="#fff" strokeWidth="1.200" d="M3 9.300h1.500M6.500 9.300h10M18.500 9.300H20" />
        </Svg>
      </TraySlot>
      <Clock>
        <Fit w={49}>10:45 PM</Fit>
      </Clock>
      <TraySlot $w={36}>
        <Svg>
          <path fill="#fff" d="M0 0h16v13h-5.500L8 16l-2.500-3H0z" />
          <path stroke="#18222b" strokeWidth="1.200" d="M3 3.500h10M3 6.300h10M3 9h6" />
        </Svg>
      </TraySlot>
      <DesktopEdge />
    </Tray>
  </Taskbar>
);

export default function App() {
  return (
    <Screen>
      <GlobalStyle />
      <BrowserTabs />
      <BrowserToolbar />
      <BookmarkBar />
      <AwsHeader />
      <Console>
        <SideRail>
          <Svg w={14} h={12} box="0 0 14 12">
            <path stroke="#545b64" strokeWidth="2" d="M0 1h14M0 6h14M0 11h14" />
          </Svg>
        </SideRail>
        <Main>
          <FeedbackBanner />
          <Viewport>
            <Card>
              <CardHeader />
              <TableHeader />
              <Rows>
                {files.map((f) => (
                  <FileRow key={f[0]} file={f} />
                ))}
              </Rows>
            </Card>
            <ScrollTrack>
              <Svg w={7} h={4} box="0 0 7 4">
                <path fill="#505050" d="M3.500 0 7 4H0z" />
              </Svg>
              <Thumb />
              <Svg w={7} h={4} box="0 0 7 4">
                <path fill="#505050" d="M3.500 4 7 0H0z" />
              </Svg>
            </ScrollTrack>
          </Viewport>
        </Main>
      </Console>
      <ConsoleFooter />
      <WindowsTaskbar />
    </Screen>
  );
}
